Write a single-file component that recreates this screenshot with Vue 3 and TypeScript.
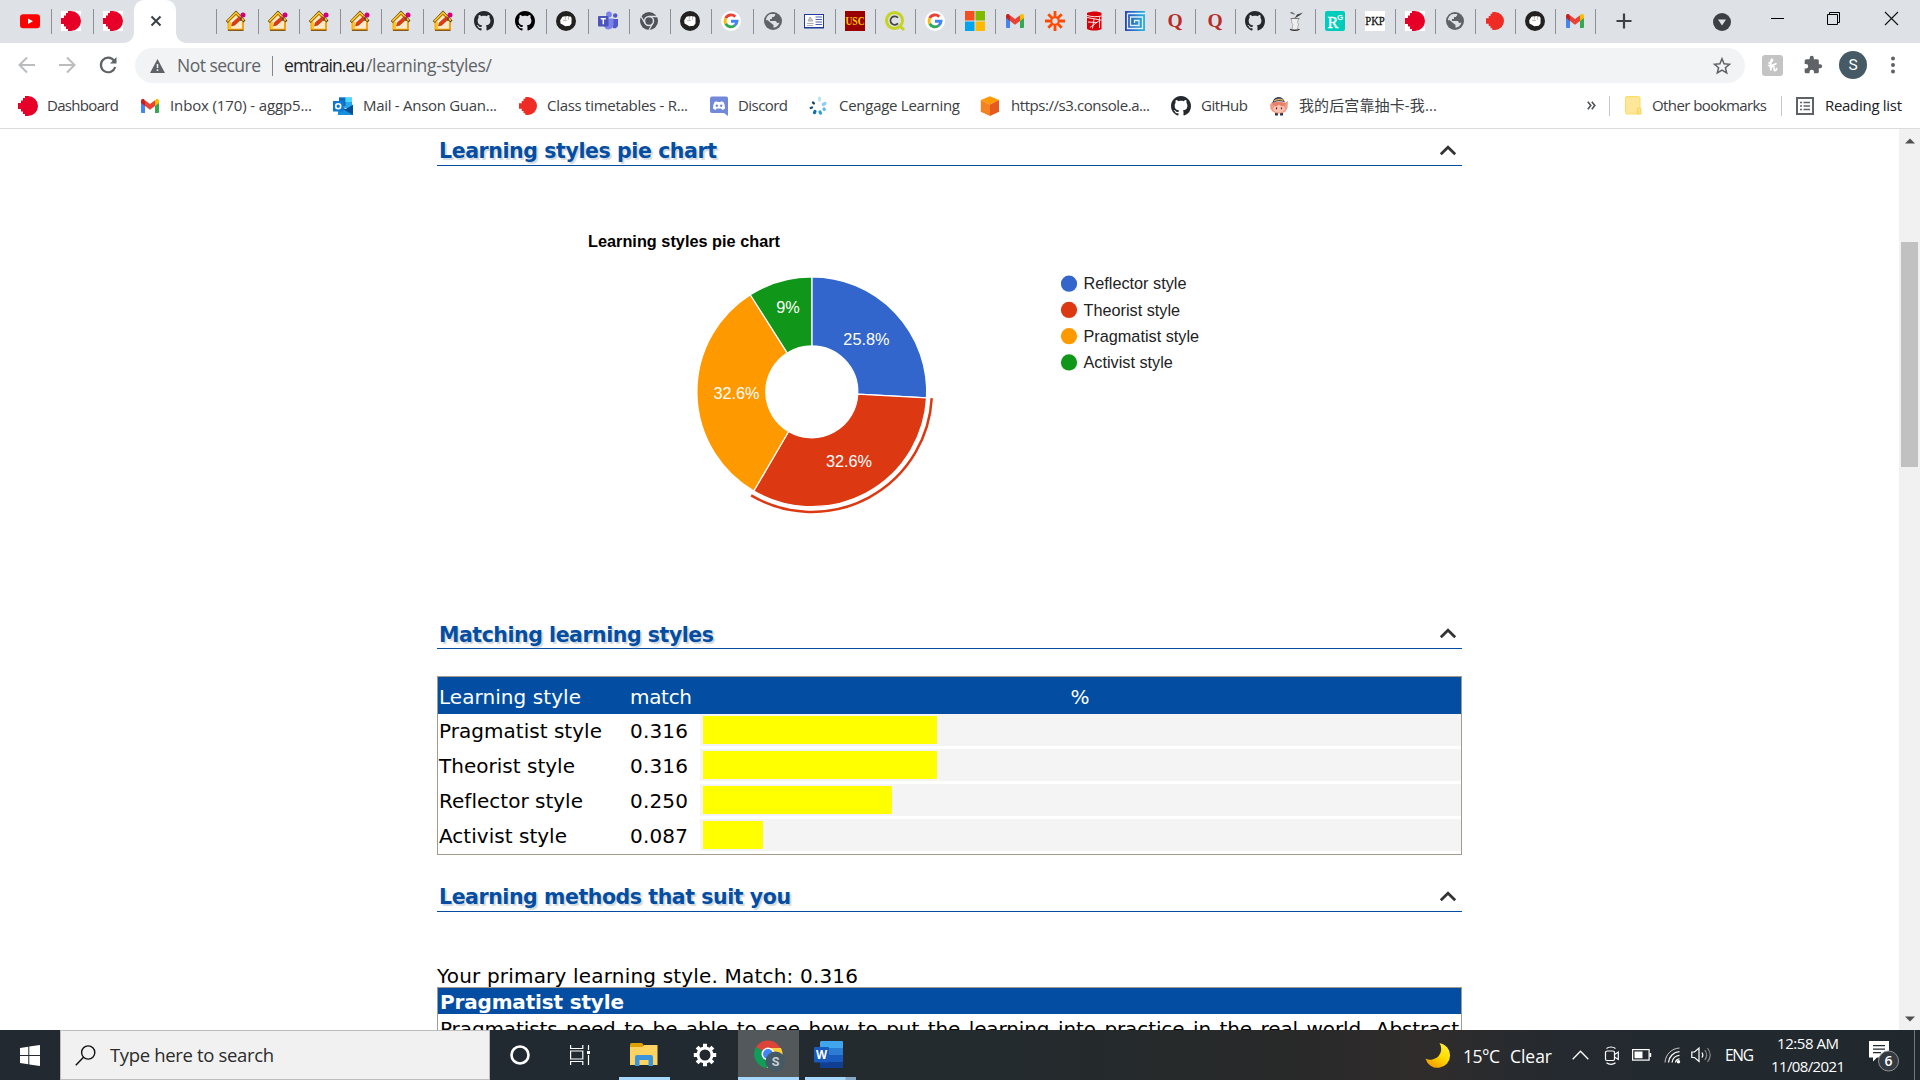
<script setup lang="ts">
interface Tab { icon: string; w: number; pad: number }
interface Bookmark { icon: string; label: string; gap: number; pad: number; w: number }
interface Slice { name: string; value: number; color: string; label: string; lx: number; ly: number }

// Spreads a label over a given width by adjusting its letter spacing.
const vFit = {
  mounted(el: HTMLElement, binding: { value: number }) {
    const range = document.createRange()
    range.selectNodeContents(el)
    const natural = range.getBoundingClientRect().width
    const count = Array.from(el.textContent || '').length
    el.style.width = binding.value + 'px'
    if (count > 1) el.style.letterSpacing = ((binding.value - natural) / (count - 1)).toFixed(3) + 'px'
  },
}

const rmit = (c: string) =>
  `<path fill="${c}" d="M10 0a10 10 0 1 1 0 20H7v-2H5v-2.500H3V13H0V7h3V4.500h2V2h2V0z"/>`
const github = (c: string) =>
  `<path fill="${c}" transform="scale(1.25)" d="M8 0C3.580 0 0 3.580 0 8c0 3.540 2.290 6.530 5.470 7.590.4.070.55-.17.55-.38 0-.19-.01-.82-.01-1.490-2.010.37-2.530-.49-2.690-.94-.09-.23-.48-.94-.82-1.130-.28-.15-.68-.52-.01-.53.63-.01 1.080.58 1.230.82.72 1.210 1.870.87 2.330.66.07-.52.28-.87.51-1.070-1.780-.2-3.640-.89-3.640-3.950 0-.87.31-1.590.82-2.150-.08-.2-.36-1.020.08-2.120 0 0 .67-.21 2.200.82.64-.18 1.320-.27 2-.27s1.360.09 2 .27c1.530-1.040 2.200-.82 2.200-.82.44 1.100.16 1.920.08 2.120.51.56.82 1.270.82 2.150 0 3.070-1.870 3.750-3.650 3.950.29.25.54.73.54 1.480 0 1.070-.01 1.930-.01 2.200 0 .21.15.46.55.38A8.010 8.010 0 0 0 16 8c0-4.420-3.580-8-8-8z"/>`
const quora = `<text x="10" y="15.800" text-anchor="middle" font-family="Liberation Serif, serif" font-weight="bold" font-size="19.500" fill="#b92b27">Q</text>`

const icons: Record<string, string> = {
  youtube: '<rect y="3.200" width="20" height="14" rx="3.200" fill="#f00"/><path d="M8 7.400v5.600l5-2.800z" fill="#fff"/>',
  rmit: '<path fill="#fff" d="M0 0h20v20H0z"/>' + rmit('#e60028'),
  rmitPlain: rmit('#e60028'),
  rmitSmall: `<g transform="translate(1 1) scale(.9)">${rmit('#ee2b24')}</g>`,
  blank: '',
  house: '<path d="M2.500 10v8.700h14.500V10L10 3z" fill="#fbe9c8" stroke="#f59a00" stroke-width="1.800"/><path d="M2.500 18.200V11h2.500v7.200z" fill="#ffc61a"/><path d="M.8 11 10 1.300 18.500 10.500" fill="none" stroke="#5a3d10" stroke-width="2.600"/><path d="M1.300 10.400 10 1.600l7.800 8" fill="none" stroke="#ffc81e" stroke-width="1.700"/><path d="m5.500 15 .8-3.300 7-6.200 2.300 2.500-6.900 6.200z" fill="#e03a12" stroke="#9c2b0a" stroke-width=".5"/><path d="M15 6v4" stroke="#444" stroke-width="1.200"/><circle cx="17" cy="4" r="2.500" fill="#d4007a"/><path d="M2 19.300h15.500" stroke="#6b4110" stroke-width="1"/>',
  github: github('#24292e'),
  githubBlack: github('#000'),
  fist: '<circle cx="10" cy="10" r="10" fill="#23211f"/><path fill="#fff" d="M4.200 9.200 6.500 5.800l2.300-.6.700.4 2.200-.7 1 .5 2 .2.900 1.300-.1 5.600-1.700 2.300-4.500.5-2.500-1.600-2.300-1.200z"/><path d="M9.300 5.800v3M12.400 5.500v3.300M6.800 9.300l4.200.3" stroke="#777" stroke-width=".5" fill="none"/>',
  teams: '<circle cx="11" cy="3.500" r="2.900" fill="#7b83eb"/><circle cx="17.200" cy="4.500" r="2.200" fill="#5059c9"/><path d="M14 8h6v6a3.500 3.500 0 0 1-5 3z" fill="#5059c9"/><path d="M6 7.500h9.500V14a5 5 0 0 1-9.500 1.500z" fill="#7b83eb"/><rect y="5" width="10.500" height="10.500" rx="1" fill="#4b53bc"/><path d="M2.700 7.700h5.200M5.300 7.700v5.600" stroke="#fff" stroke-width="1.500"/>',
  chromeGrey: '<circle cx="10" cy="10" r="9" fill="#50545a"/><circle cx="10" cy="10" r="4.500" fill="#50545a" stroke="#dee1e6" stroke-width="1.500"/><path d="M10 5.500h8M6.200 12.300 2 5.500M13.800 12.300 10 19" stroke="#dee1e6" stroke-width="1.300"/>',
  google: '<circle cx="10" cy="10" r="10" fill="#fff"/><g fill="none" stroke-width="2.900"><path d="M14.300 5.700A6 6 0 0 0 4.700 7.200" stroke="#ea4335"/><path d="M4.700 7.200a6 6 0 0 0 0 5.600" stroke="#fbbc05"/><path d="M4.700 12.800a6 6 0 0 0 9.100 1.700" stroke="#34a853"/><path d="M10 10.200h6a6 6 0 0 1-2.200 4.300" stroke="#4285f4"/></g>',
  globe: '<circle cx="10" cy="10" r="9" fill="#5f6368"/><path d="M3 9.500c0-3 2-6 5-6.500l4 0c1 1.500-1 2-1 3H9v2H7v2h5c2 0 1 2 3 2l1.500-.5c-.8 3-3.500 5-6 5.200V14L8 12l-3.500-3z" fill="#dee1e6"/>',
  news: '<rect x=".5" y="3.500" width="19" height="13" fill="#fff" stroke="#1f3a9a"/><path d="M0 17h20" stroke="#1f3a9a" stroke-width="1"/><path d="M3 12.500h6.500M3 14.500h6M4 10l2-4 3 4z" stroke="#aaa" fill="#ccc"/><path d="M11.500 6H18M11.500 8.500H18M11.500 11H18M11.500 13.500H18" stroke="#4a5fb8"/>',
  usc: '<path fill="#900" d="M0 0h20v20H0z"/><text x="10" y="14" text-anchor="middle" textLength="19" lengthAdjust="spacingAndGlyphs" font-family="Liberation Serif, serif" font-weight="bold" font-size="12" fill="#fc0">USC</text>',
  qlik: '<circle cx="9.500" cy="9.500" r="8" fill="none" stroke="#c6d420" stroke-width="3"/><path d="m15 15 4 4" stroke="#c6d420" stroke-width="3"/><path d="M13 6.800a4.300 4.300 0 1 0 0 5.600" fill="none" stroke="#444" stroke-width="1.700"/>',
  ms: '<path fill="#f25022" d="M0 0h9.500v9.500H0z"/><path fill="#7fba00" d="M10.500 0H20v9.500h-9.500z"/><path fill="#00a4ef" d="M0 10.500h9.500V20H0z"/><path fill="#ffb900" d="M10.500 10.500H20V20h-9.500z"/>',
  gmail: '<path fill="#4285f4" d="M1 5v10.500A1.200 1.200 0 0 0 2.200 17H5V8.500z"/><path fill="#34a853" d="M19 5v10.500a1.200 1.200 0 0 1-1.200 1.500H15V8.500z"/><path fill="#fbbc04" d="M15 4.500V10l4-3V5c0-2-2-2.500-3.200-1.500z"/><path fill="#c5221f" d="M5 4.500V10L1 7V5c0-2 2-2.500 3.200-1.500z"/><path fill="#ea4335" d="M5 10V4.200l5 3.900 5-3.900V10l-5 3.800z"/>',
  zapier: '<g stroke="#ff4a00" stroke-width="2.800"><path d="M10 0v6.500M10 13.500V20M0 10h6.500M13.500 10H20M3.300 3.300l4.200 4.200M12.500 12.500l4.200 4.200M16.700 3.300l-4.200 4.200M7.500 12.500l-4.200 4.200"/></g><circle cx="10" cy="10" r="3.700" fill="#dee1e6" stroke="#ff4a00" stroke-width="2"/>',
  redbrick: '<path fill="#d90007" d="M2 2c5-2 11-2 14.500 0v16c-4 2-10 2-14.500 0z"/><path d="M2 4.500c5 1.500 10 1.500 14.500.5M2 6.500l14.500 2.700M14.500 6v11M14.500 9.500 5 16.500M3 11l9 .5M9 8l-1.500 9.500" stroke="#fff" stroke-width=".9" fill="none"/>',
  maze: '<linearGradient id="mz" x2="1" y2="0"><stop stop-color="#2a44b8"/><stop offset="1" stop-color="#2bb6dc"/></linearGradient><path fill="url(#mz)" d="M0 0h20v20H0z"/><path d="M2.500 2.500v15h15V6h-12v8.500h8.500V9.500H9.500v2.500M2.500 2.500H20" fill="none" stroke="#dff1fa" stroke-width="1.300"/>',
  quora,
  tree: '<path d="M6.500 8c2-1.200 5-1.200 7 0l-1 3.500 1 1.500-1 5c-1.800 1-3.700 1-5.500 0l.8-4.500L6.500 11z" fill="#eee" stroke="#999" stroke-width=".7"/><path d="M5 18.200c2.500 1.500 7 1.500 9.500 0" fill="none" stroke="#333" stroke-width="1.200"/><path d="M5.500 7.500h9" stroke="#666" stroke-width=".8"/><path d="M9.500 7.500 12 3.500l6-2-3.500 3z" fill="#444"/><path d="M5 1.500c2-1 4 0 5 2-2 0-4-.5-5-2z" fill="#777"/>',
  rg: '<rect width="20" height="20" rx="2" fill="#00ccbb"/><text x="2.500" y="17" font-family="Liberation Serif, serif" font-size="16" fill="#fff" stroke="#fff" stroke-width=".4">R</text><text x="12" y="8.500" font-family="Liberation Sans, sans-serif" font-weight="bold" font-size="8" fill="#fff">G</text>',
  pkp: '<path fill="#fff" d="M0 0h20v20H0z"/><text x="10" y="14" text-anchor="middle" textLength="19.500" lengthAdjust="spacingAndGlyphs" font-family="Liberation Serif, serif" font-size="12" fill="#111" stroke="#111" stroke-width=".3">PKP</text>',
  outlook: '<path fill="#28a8ea" d="M6 1.500h13V12H6z"/><path fill="#0f6cbd" d="M6 1.500h6.500V10H6z"/><path fill="#50d9ff" d="M12.500 1.500H19V6h-6.500z"/><path fill="#1490df" d="M5 10l7.500 3L20 8.500V19H5z"/><path fill="#0a4f94" d="m8 12 12 7V9l-7 4z"/><path fill="#0f78d4" d="M0 5h10.500v10.500H0z"/><circle cx="5.200" cy="10.200" r="2.500" fill="none" stroke="#fff" stroke-width="1.600"/>',
  discord: '<path fill="#7289da" d="M3 .5h14a2 2 0 0 1 2 2V20l-4-3H3a2 2 0 0 1-2-2V2.500a2 2 0 0 1 2-2z"/><path fill="#fff" d="M4 12.500c0-3 .8-5 1.500-6.500l2.500-.8.500.8h3l.5-.8 2.500.8c.8 1.500 1.500 3.500 1.500 6.500-1 1-2 1.200-3 1.300l-.6-1.200H7.600L7 13.800c-1-.1-2-.3-3-1.300z"/><circle cx="7.800" cy="9.800" r="1.200" fill="#7289da"/><circle cx="12.200" cy="9.800" r="1.200" fill="#7289da"/>',
  cengage: '<g stroke-linecap="round" stroke-width="3.200"><path d="M11.500 2v2" stroke="#b9e5f7"/><path d="m17 7.500-1.800 1" stroke="#8fd0ee"/><path d="m16 13 .3.500" stroke="#5cbbe8"/><path d="m12 16 .5 1.200" stroke="#2aa0dc"/><path d="m7 15.500-.5 1.200" stroke="#0f6fae"/><path d="M4 11.500 2.800 12" stroke="#174e7c" stroke-width="2.400"/><path d="m5 6.500.8.800" stroke="#124266" stroke-width="2.400"/></g>',
  s3: '<path fill="#f90" d="M10 .3 19 4l-9 4.500L.8 4z"/><path fill="#f58220" d="M.8 4 10 8.500V20L.8 15.800z"/><path fill="#e8591c" d="M19 4v11.800L10 20V8.500z"/>',
  anime: '<path d="M6 15v4.500h3V17M11 17v2.500h3V15" fill="#2c3852"/><path fill="#f09a84" d="M3 6 1 9l.5 4 2 2.500c3 2.500 10 2.500 13 0l2-3.500.5-7-3.500 2z"/><ellipse cx="10" cy="12.500" rx="5.800" ry="4" fill="#fbc4b0"/><path fill="#3b4766" d="M3.500 7c1-8 11-8 12.500-.5-4-2-8-1.800-12.500.5z"/><path d="M5 5c3-2 7-1.800 9.500-.5" stroke="#e9b949" stroke-width="1.200" fill="none"/><path fill="#e8806b" d="M3 7.500c3.500-2.500 10-2.500 14 0-1 2-3 3-5 2.500L10 8.500 8 10c-2 .5-4-.5-5-2.500z"/><path d="M7.500 11.500v1.800M12.500 11.500v1.800" stroke="#513" stroke-width="1.200"/>',
}

const tabs: Tab[] = [
  { icon: 'youtube', w: 52, pad: 20 },
  { icon: 'rmit', w: 42, pad: 9 },
]

const rightTabs: Tab[] = ([
  ['blank', 41], ['house', 42], ['house', 41], ['house', 41], ['house', 41], ['house', 42],
  ['house', 41], ['github', 41], ['githubBlack', 41], ['fist', 42], ['teams', 41],
  ['chromeGrey', 41], ['fist', 41], ['google', 42], ['globe', 41], ['news', 41],
  ['usc', 40], ['qlik', 40], ['google', 40], ['ms', 40], ['gmail', 40], ['zapier', 40],
  ['redbrick', 40], ['maze', 40], ['quora', 40], ['quora', 40], ['github', 40],
  ['tree', 40], ['rg', 40], ['pkp', 40], ['rmit', 40], ['globe', 40], ['rmitSmall', 40],
  ['fist', 40], ['gmail', 40],
] as [string, number][]).map(([icon, w]) => ({ icon, w, pad: 9 }))

const bookmarks: Bookmark[] = [
  { icon: 'rmitPlain', label: 'Dashboard', gap: 18, pad: 9, w: 72 },
  { icon: 'gmail', label: 'Inbox (170) - aggp5...', gap: 21, pad: 10, w: 142 },
  { icon: 'outlook', label: 'Mail - Anson Guan...', gap: 21, pad: 10, w: 134 },
  { icon: 'rmitSmall', label: 'Class timetables - R...', gap: 21, pad: 9, w: 141 },
  { icon: 'discord', label: 'Discord', gap: 21, pad: 9, w: 50 },
  { icon: 'cengage', label: 'Cengage Learning', gap: 20, pad: 11, w: 121 },
  { icon: 's3', label: 'https://s3.console.a...', gap: 20, pad: 11, w: 139 },
  { icon: 'github', label: 'GitHub', gap: 21, pad: 10, w: 47 },
  { icon: 'anime', label: '我的后宫靠抽卡-我...', gap: 21, pad: 10, w: 138 },
]

const cx = 811.8
const cy = 391.8
const slices: Slice[] = [
  { name: 'Reflector style', value: 23, color: '#3366cc', label: '25.8%', lx: 866.4, ly: 344.5 },
  { name: 'Theorist style', value: 29, color: '#dc3912', label: '32.6%', lx: 849, ly: 467 },
  { name: 'Pragmatist style', value: 29, color: '#ff9900', label: '32.6%', lx: 736.5, ly: 399 },
  { name: 'Activist style', value: 8, color: '#109618', label: '9%', lx: 787.9, ly: 313 },
]
const total = slices.reduce((sum, s) => sum + s.value, 0)
const point = (r: number, t: number) => {
  const a = t * 2 * Math.PI
  return `${(cx + r * Math.sin(a)).toFixed(2)} ${(cy - r * Math.cos(a)).toFixed(2)}`
}
let acc = 0
const arcs = slices.map((s) => {
  const a = acc / total
  acc += s.value
  const b = acc / total
  return {
    ...s,
    d: `M${point(114.9, a)}A114.9 114.9 0 0 1 ${point(114.9, b)}L${point(46, b)}A46 46 0 0 0 ${point(46, a)}Z`,
    ring: `M${point(120.1, a)}A120.1 120.1 0 0 1 ${point(120.1, b)}`,
  }
})

const rows = [
  { name: 'Pragmatist style', nw: 163, match: '0.316', bar: 234 },
  { name: 'Theorist style', nw: 136, match: '0.316', bar: 234 },
  { name: 'Reflector style', nw: 144, match: '0.250', bar: 189 },
  { name: 'Activist style', nw: 128, match: '0.087', bar: 60 },
]
</script>

<template>
  <div class="screen">
    <header class="tabstrip">
      <div v-for="(t, i) in tabs" :key="i" class="tab" :style="{ width: t.w + 'px', paddingLeft: t.pad + 'px' }">
        <svg width="20" height="20" viewBox="0 0 20 20" v-html="icons[t.icon]" />
      </div>
      <div class="tab before"><svg width="20" height="20" viewBox="0 0 20 20" v-html="icons.rmit" /></div>
      <div class="tab active">
        <svg width="12" height="12" viewBox="0 0 12 12"><path d="m1.500 1.500 9 9m0-9-9 9" stroke="#3c4043" stroke-width="2" /></svg>
      </div>
      <div v-for="(t, i) in rightTabs" :key="'r' + i" class="tab" :style="{ width: t.w + 'px', paddingLeft: t.pad + 'px' }">
        <svg width="20" height="20" viewBox="0 0 20 20" v-html="icons[t.icon]" />
      </div>
      <svg class="plus" width="16" height="16" viewBox="0 0 16 16"><path d="M8 .5v15M.5 8h15" stroke="#3c4043" stroke-width="2.200" /></svg>
      <div class="window-buttons">
        <svg width="18" height="18" viewBox="0 0 18 18"><circle cx="9" cy="9" r="9" fill="#3c4043" /><path d="M5 6.500h8L9 12.500z" fill="#dee1e6" /></svg>
        <svg class="min" width="13" height="13" viewBox="0 0 13 13"><path d="M0 6.500h13" stroke="#000" /></svg>
        <svg class="restore" width="13" height="13" viewBox="0 0 13 13"><path d="M.5 2.500h10v10H.5zM2.500 2.500v-2h10v10h-2" fill="none" stroke="#000" /></svg>
        <svg class="close" width="13" height="13" viewBox="0 0 13 13"><path d="m0 0 13 13M13 0 0 13" stroke="#111" stroke-width="1.100" /></svg>
      </div>
    </header>

    <div class="toolbar">
      <svg class="back" width="18" height="18" viewBox="0 0 18 18"><path d="M17 9H2M9 1.500 1.500 9 9 16.500" fill="none" stroke="#babcbe" stroke-width="2" /></svg>
      <svg class="forward" width="18" height="18" viewBox="0 0 18 18"><path d="M1 9h15M9 1.500 16.500 9 9 16.500" fill="none" stroke="#babcbe" stroke-width="2" /></svg>
      <svg class="reload" width="18" height="18" viewBox="0 0 18 18"><path d="M15 4.500A7.300 7.300 0 1 0 16.200 11" fill="none" stroke="#5f6368" stroke-width="2.200" /><path d="M17.500 1v6.500H11z" fill="#5f6368" /></svg>
      <div class="omnibox">
        <svg width="15" height="14" viewBox="0 0 15 14"><path d="M7.500 0 15 14H0z" fill="#5f6368" /><path d="M7.500 5v4M7.500 10.300v1.700" stroke="#f1f3f4" stroke-width="1.500" /></svg>
        <span v-fit="84" class="not-secure">Not secure</span>
        <i class="bar" />
        <span v-fit="81" class="host">emtrain.eu</span>
        <span v-fit="126" class="path">/learning-styles/</span>
        <svg class="star" width="18" height="18" viewBox="0 0 18 18"><path d="m9 1.800 2.100 5 5.400.5-4.100 3.500 1.300 5.200L9 13.200l-4.700 2.800 1.300-5.200-4.100-3.500 5.400-.5z" fill="none" stroke="#5f6368" stroke-width="1.500" /></svg>
      </div>
      <svg class="honey" width="21" height="21" viewBox="0 0 21 21"><rect width="21" height="21" rx="3" fill="#c4c4c4" /><path d="M7 8c3-.5 4.500-3.500 3-3.700S8.500 10 8.700 15.500c.3-3.500 1.500-4.700 2.700-4.500s0 4.300 1.300 4.500 1.800-1 2-2M6.500 10.500c2 .5 5-.2 7.500-1.700" fill="none" stroke="#fff" stroke-width="1.700" stroke-linecap="round" /></svg>
      <svg class="puzzle" width="20" height="20" viewBox="0 0 24 24"><path fill="#5f6368" d="M20.500 11H19V7a2 2 0 0 0-2-2h-4V3.500a2.500 2.500 0 0 0-5 0V5H4a2 2 0 0 0-2 2v3.800h1.500a2.700 2.700 0 0 1 0 5.400H2V20a2 2 0 0 0 2 2h3.800v-1.500a2.700 2.700 0 0 1 5.400 0V22H17a2 2 0 0 0 2-2v-4h1.500a2.500 2.500 0 0 0 0-5z" /></svg>
      <div class="avatar">S</div>
      <svg class="dots" width="4" height="18" viewBox="0 0 4 18"><g fill="#5f6368"><circle cx="2" cy="2.500" r="2" /><circle cx="2" cy="9" r="2" /><circle cx="2" cy="15.500" r="2" /></g></svg>
    </div>

    <nav class="bookmarks">
      <div v-for="b in bookmarks" :key="b.label" class="bookmark" :style="{ marginLeft: b.gap + 'px', gap: b.pad + 'px' }">
        <svg width="20" height="20" viewBox="0 0 20 20" v-html="icons[b.icon]" />
        <span v-fit="b.w">{{ b.label }}</span>
      </div>
      <div class="bookmarks-end">
        <svg class="more" width="9" height="9" viewBox="0 0 9 9"><path d="m.8.8 3 3.700-3 3.700M4.800.8l3 3.700-3 3.700" fill="none" stroke="#4d5156" stroke-width="1.600" /></svg>
        <i />
        <svg class="folder" width="17" height="19" viewBox="0 0 17 19"><rect x=".5" y=".5" width="14.500" height="17.500" rx="1.500" fill="#ffe79a" stroke="#fddc63" /><path d="M12.500 12.500c1.500-1.500 3.500-1 3.500 1v4.500h-3.500z" fill="#ffe07a" stroke="#f6cf50" stroke-width=".8" /></svg>
        <span v-fit="115">Other bookmarks</span>
        <i />
        <svg class="list" width="18" height="18" viewBox="0 0 18 18"><rect x="1" y="1" width="16" height="16" fill="none" stroke="#5f6368" stroke-width="2" /><path d="M4 5.500h2M4 9h2M4 12.500h2M7.500 5.500H14M7.500 9H14M7.500 12.500H14" stroke="#5f6368" stroke-width="1.500" /></svg>
        <span v-fit="77" class="dark">Reading list</span>
      </div>
    </nav>

    <div class="viewport">
      <main class="page">
        <h2><span v-fit="278">Learning styles pie chart</span><svg width="18" height="11" viewBox="0 0 18 11"><path d="m1.800 9.200 7.200-7 7.200 7" /></svg></h2>
        <svg class="chart" width="1025" height="446" viewBox="437 166 1025 446">
          <text class="chart-title" x="588" y="247" textLength="192">Learning styles pie chart</text>
          <path v-for="a in arcs" :key="a.name" :d="a.d" :fill="a.color" stroke="#fff" stroke-width="1.250" />
          <path :d="arcs[1].ring" fill="none" stroke="#dc3912" stroke-width="2.500" />
          <text v-for="a in arcs" :key="'l' + a.name" class="pct" :x="a.lx" :y="a.ly">{{ a.label }}</text>
          <g v-for="(a, i) in arcs" :key="'g' + a.name">
            <circle cx="1069" :cy="283.7 + i * 26.25" r="8.100" :fill="a.color" />
            <text class="legend" x="1083.500" :y="289.400 + i * 26.25">{{ a.name }}</text>
          </g>
        </svg>

        <h2 class="low"><span v-fit="275">Matching learning styles</span><svg width="18" height="11" viewBox="0 0 18 11"><path d="m1.800 9.200 7.200-7 7.200 7" /></svg></h2>
        <section class="matches">
          <div class="row head">
            <div class="name"><span v-fit="142">Learning style</span></div>
            <div class="match"><span v-fit="62">match</span></div>
            <div class="percent">%</div>
          </div>
          <div v-for="r in rows" :key="r.name" class="row">
            <div class="name"><span v-fit="r.nw">{{ r.name }}</span></div>
            <div class="match"><span v-fit="58">{{ r.match }}</span></div>
            <div class="track"><div class="fill" :style="{ width: r.bar + 'px' }" /></div>
          </div>
        </section>

        <h2 class="third"><span v-fit="352">Learning methods that suit you</span><svg width="18" height="11" viewBox="0 0 18 11"><path d="m1.800 9.200 7.200-7 7.200 7" /></svg></h2>
        <p class="primary"><span v-fit="421">Your primary learning style. Match: 0.316</span></p>
        <section class="style-box">
          <h3><span v-fit="184">Pragmatist style</span></h3>
          <p>Pragmatists need to be able to see how to put the learning into practice in the real world. Abstract</p>
        </section>
      </main>
      <aside class="scrollbar">
        <svg width="10" height="6" viewBox="0 0 10 6"><path d="M0 5.500 5 .5l5 5z" fill="#505050" /></svg>
        <div class="thumb" />
        <svg class="down" width="10" height="6" viewBox="0 0 10 6"><path d="m0 .5 5 5 5-5z" fill="#505050" /></svg>
      </aside>
    </div>

    <footer class="taskbar">
      <div class="start">
        <svg width="20" height="21" viewBox="0 0 20 21"><path fill="#fff" d="M0 3 8.300 1.800V10H0zM9.300 1.600 20 0v10H9.300zM0 11h8.300v8.200L0 18zM9.300 11H20v10L9.300 19.400z" /></svg>
      </div>
      <div class="search">
        <svg width="21" height="21" viewBox="0 0 21 21"><circle cx="13.200" cy="7.500" r="6.600" fill="none" stroke="#111" stroke-width="1.400" /><path d="M8.500 12.300.8 20.200" stroke="#111" stroke-width="1.500" /></svg>
        <span v-fit="164">Type here to search</span>
      </div>
      <div class="app cortana"><svg width="20" height="20" viewBox="0 0 20 20"><circle cx="10" cy="10" r="8.500" fill="none" stroke="#fff" stroke-width="2.600" /></svg></div>
      <div class="app taskview"><svg width="20" height="20" viewBox="0 0 20 20"><path d="M.6 0v3.500h12.200V0M.6 6h12.200v8H.6zM.6 20v-3.500h12.200V20M18.500 0v5M18.500 10v10" fill="none" stroke="#fff" stroke-width="1.200" /><path d="M17 6h3v3h-3z" fill="#fff" /></svg></div>
      <div class="app open explorer"><svg width="28" height="24" viewBox="0 0 28 24"><path d="M0 1.500A1.500 1.500 0 0 1 1.500 0H12l1.500 2-1.500 3H0z" fill="#e0a000" /><path d="M0 4h12l2-2h13.500v20H0z" fill="#ffd362" /><path d="M5 14a2 2 0 0 1 2-2h14a2 2 0 0 1 2 2v9h-4.500v-6h-9v6H5z" fill="#3a95dd" /></svg></div>
      <div class="app gear"><svg width="24" height="24" viewBox="0 0 24 24"><circle cx="12" cy="12" r="7" fill="none" stroke="#fff" stroke-width="3" /><g stroke="#fff" stroke-width="4"><path d="M12 .8v4M12 19.200v4M.8 12h4M19.200 12h4M4.100 4.100l2.800 2.800M17.100 17.100l2.800 2.800M19.900 4.100l-2.800 2.800M6.900 17.100l-2.800 2.800" /></g><circle cx="12" cy="12" r="5" fill="#22292f" /></svg></div>
      <div class="app open chrome">
        <svg width="32" height="32" viewBox="0 0 32 32"><path d="M14 14 1.900 7.200A14 14 0 0 1 26.100 7.500L28 10z" fill="#db4437" /><path d="M14 14 2 7a14 14 0 0 0 11 21l3-2z" fill="#0f9d58" /><path d="M14 8h13a14 14 0 0 1-14 20z" fill="#ffcd40" /><circle cx="14" cy="14" r="6.500" fill="#fff" /><circle cx="14" cy="14" r="5" fill="#4285f4" /><circle cx="21.500" cy="21.500" r="10" fill="#455a64" /><text x="21.500" y="26" text-anchor="middle" font-family="Roboto, sans-serif" font-weight="bold" font-size="12.500" fill="#c9d0d4">S</text></svg>
      </div>
      <div class="app open word"><svg width="30" height="27" viewBox="0 0 30 27"><path fill="#41a5ee" d="M7 0h21a1 1 0 0 1 1 1v6H6V1z" /><path fill="#2b7cd3" d="M6 7h23v7H6z" /><path fill="#185abd" d="M6 14h23v7H6z" /><path fill="#103f91" d="M6 21h23v5a1 1 0 0 1-1 1H7a1 1 0 0 1-1-1z" /><rect y="6" width="15" height="15.500" rx="1" fill="#185abd" /><text x="7.500" y="18" text-anchor="middle" font-family="Open Sans, sans-serif" font-weight="bold" font-size="11.500" fill="#fff">W</text></svg></div>
      <div class="tray">
        <svg class="moon" width="24" height="24" viewBox="0 0 24 24"><defs><linearGradient id="moon" x1="1" y1="0" x2=".4" y2="1"><stop stop-color="#fff04a" /><stop offset=".55" stop-color="#fd0" /><stop offset="1" stop-color="#f8a100" /></linearGradient></defs><path d="M14.500 0A12.500 12.500 0 1 1 .5 15.500 10.800 10.800 0 0 0 14.500 0z" fill="url(#moon)" /></svg>
        <span v-fit="37" class="temp">15°C</span>
        <span v-fit="42" class="clear">Clear</span>
        <svg class="chev" width="17" height="10" viewBox="0 0 17 10"><path d="M.7 9.200 8.500 1.200l7.800 8" fill="none" stroke="#fff" stroke-width="1.300" /></svg>
        <svg class="cam" width="16" height="19" viewBox="0 0 16 19"><g fill="none" stroke="#fff" stroke-width="1.200"><rect x="1.500" y="5" width="9" height="9.500" rx="1.500" /><path d="m10.500 8.500 3.800-2.500v7.500l-3.800-2.500M2.500 2.500C5 .5 9 .5 11.500 2.500M2.500 16.800c2.500 2 6.500 2 9 0" /></g></svg>
        <svg class="battery" width="20" height="12" viewBox="0 0 20 12"><rect x=".6" y=".6" width="16.500" height="10.500" fill="none" stroke="#fff" stroke-width="1.200" /><path d="M2.500 2.500h8v6.800h-8zM17.500 4h1.700v4h-1.700z" fill="#fff" /></svg>
        <svg class="wifi" width="17" height="17" viewBox="0 0 17 17"><g fill="none" stroke="#fff"><path d="M1 15.500C1.500 7.500 7.500 1.500 15.500 1" stroke-width="1" stroke-opacity=".75" /><path d="M4.500 15.500C5 9.500 9.500 5 15.500 4.700" stroke-width="1.300" /><path d="M8 15.500C8.500 11.500 11.500 8.500 15.500 8.300" stroke-width="1.300" /><path d="M11.500 15.500c.3-2 2-3.500 4-3.700" stroke-width="1.300" /></g><circle cx="14.500" cy="14.800" r="1.700" fill="#fff" /></svg>
        <svg class="speaker" width="21" height="18" viewBox="0 0 21 18"><g fill="none" stroke="#fff" stroke-width="1.200"><path d="M.8 6h2.700L8 2v13.500l-4.500-4H.8z" /><path d="M11 6.500c1 1.500 1 3.500 0 5" /><path d="M13.800 4c2.200 3 2.200 7 0 10M16.500 2c3.500 4.500 3.500 9.500 0 14" stroke-opacity=".45" /></g></svg>
        <span v-fit="29" class="lang">ENG</span>
        <div class="clock"><span v-fit="62">12:58 AM</span><span v-fit="74">11/08/2021</span></div>
        <svg class="notes" width="31" height="31" viewBox="0 0 31 31"><path d="M0 0h20v16.500H8l-4 4v-4H0z" fill="#fff" /><path d="M4 4.700h12M4 8.200h12M4 11.700h8" stroke="#22292f" stroke-width="1.300" /><circle cx="19.500" cy="20" r="10" fill="#343a3f" stroke="#8d9194" /><text x="19.500" y="25.200" text-anchor="middle" font-family="Open Sans, sans-serif" font-weight="600" font-size="14" fill="#fff">6</text></svg>
        <i />
      </div>
    </footer>
  </div>
</template>

<style>
body { margin: 0; overflow: hidden; }
</style>

<style scoped>
.screen { width: 1920px; height: 1080px; display: flex; flex-direction: column; background: #fff; overflow: hidden; font-family: "Open Sans", "Noto Sans", "Noto Sans CJK SC", sans-serif; }
.screen * { box-sizing: border-box; }
svg { display: block; flex: none; overflow: visible; }
span { display: inline-block; white-space: nowrap; flex: none; }

.tabstrip { height: 43px; display: flex; align-items: flex-start; background: #dee1e6; flex: none; }
.tab { height: 25px; margin-top: 9px; padding-top: 2px; border-right: 1px solid #8d9095; flex: none; }
.tab.before { width: 40px; padding-left: 9px; border: 0; }
.tab.active { position: relative; width: 42px; height: 43px; margin-top: 0; padding: 15px 0 0 16px; border: 0; background: #fff; border-radius: 10px 10px 0 0; }
.tab.active::before, .tab.active::after { content: ""; position: absolute; bottom: 0; width: 10px; height: 10px; }
.tab.active::before { left: -10px; background: radial-gradient(circle at 0 0, transparent 9.500px, #fff 10px); }
.tab.active::after { right: -10px; background: radial-gradient(circle at 100% 0, transparent 9.500px, #fff 10px); }
.plus { margin: 13px 0 0 20px; }
.window-buttons { display: flex; align-items: flex-start; margin-left: auto; padding: 12px 22px 0 0; }
.window-buttons .min { margin-left: 40px; }
.window-buttons .restore { margin-left: 43px; }
.window-buttons .close { margin-left: 45px; }
.window-buttons > svg:first-child { margin-top: 1px; }

.toolbar { height: 44px; display: flex; align-items: center; flex: none; }
.back { margin-left: 18px; }
.forward { margin-left: 22px; }
.reload { margin-left: 23px; }
.omnibox { width: 1610px; height: 35px; margin: 1px 0 0 18px; padding: 0 14px 0 15px; display: flex; align-items: center; border-radius: 18px; background: #f1f3f4; font-size: 17.500px; line-height: 35px; }
.not-secure { margin-left: 12px; color: #5f6368; }
.bar { width: 1px; height: 20px; margin: 0 11px; background: #80868b; }
.host { color: #202124; }
.path { margin-left: 1px; color: #5f6368; }
.star { margin-left: auto; }
.honey { margin-left: 17px; }
.puzzle { margin-left: 20px; }
.avatar { width: 28px; height: 28px; margin-left: 16px; border-radius: 50%; background: #455a64; color: #fff; font: 15.500px/28px Roboto, sans-serif; text-align: center; }
.dots { margin-left: 24px; }

.bookmarks { height: 42px; display: flex; align-items: center; padding-bottom: 4px; border-bottom: 1px solid #dadce0; font-size: 15px; line-height: 28px; color: #3c4043; flex: none; }
.bookmarks span { padding-bottom: 2px; }
.bookmark { display: flex; align-items: center; }
.bookmarks-end { display: flex; align-items: center; margin-left: auto; padding-right: 18px; }
.bookmarks-end i { width: 1px; height: 20px; background: #c4c7cb; }
.more { margin-right: 13px; }
.folder { margin: 0 10px 0 15px; }
.bookmarks-end span + i { margin-left: 14px; }
.list { margin: 0 11px 0 14px; }
.dark { color: #202124; }

.viewport { height: 901px; display: flex; overflow: hidden; flex: none; }
.page { width: 1025px; margin-left: 437px; font-family: "DejaVu Sans", Verdana, sans-serif; font-size: 20px; color: #000; }
h2 { height: 37px; margin: 0; padding: 8px 5px 0 2px; display: flex; justify-content: space-between; border-bottom: 1px solid #034ea2; color: #034ea2; font-size: 20.500px; line-height: 28px; text-shadow: 2px 2px 1px #d3dae1; }
h2.low { padding-top: 9px; }
h2 svg { margin-top: 8px; }
h2.low svg { margin-top: 7px; }
h2 path { fill: none; stroke: #333; stroke-width: 2.700; }
.chart { font-family: "Liberation Sans", Arial, sans-serif; }
.chart-title { font-size: 16.250px; font-weight: bold; }
.pct { font-size: 16.250px; fill: #fff; text-anchor: middle; }
.legend { font-size: 16.250px; fill: #222; }
.matches { height: 179px; margin-top: 27px; border: 1px solid #a39b8c; }
.row { height: 35px; display: flex; line-height: 35px; }
.row.head { height: 37px; padding-top: 3px; background: #034ea2; color: #fff; }
.name { width: 190px; padding-left: 1px; }
.match { width: 72px; padding-left: 2px; }
.percent { flex: 1; padding-right: 1px; text-align: center; }
.track { flex: 1; height: 32px; padding: 2px 3px; background: #f4f4f4; }
.fill { height: 28px; background: #ff0; }
.third { margin-top: 20px; }
.primary { height: 23px; margin: 52px 0 0; line-height: 24px; }
.style-box { height: 80px; border: 1px solid #a39b8c; }
h3 { height: 26px; margin: 0; padding-left: 2px; background: #034ea2; color: #fff; font-size: 20px; line-height: 28px; }
.style-box p { margin: 0; padding: 2px 2px 0; line-height: 27px; white-space: nowrap; letter-spacing: -.1px; text-align: justify; text-align-last: justify; }

.scrollbar { width: 21px; margin-left: auto; padding: 9px 0 8px; display: flex; flex-direction: column; align-items: center; background: #f1f1f1; }
.thumb { width: 17px; height: 225px; margin-top: 98px; background: #c1c1c1; }
.down { margin-top: auto; }

.taskbar { height: 50px; display: flex; flex: none; background: linear-gradient(90deg, #222930 0, #222a31 700px, #242b2e 900px, #242a2c 1100px, #292929 1300px, #302c2c 1420px, #242a2f 1560px, #20282e 1920px); color: #fff; }
.start { width: 60px; padding: 15px 0 0 20px; }
.search { width: 430px; display: flex; align-items: center; padding-left: 14px; border: 1px solid #bcbcbc; background: #f1f1f1; color: #2b2b2b; font-size: 18.500px; line-height: 48px; }
.search span { margin-left: 14px; }
.app { position: relative; display: flex; align-items: center; justify-content: center; }
.cortana { width: 60px; }
.taskview { width: 60px; }
.explorer { width: 51px; margin-left: 9px; padding-right: 2px; }
.gear { width: 60px; margin-left: 5px; }
.chrome { width: 61px; margin-left: 3px; padding: 2px 0 0 2px; background: #53585b; }
.word { width: 51px; margin-left: 6px; padding-right: 4px; padding-bottom: 1px; }
.app.open::after { content: ""; position: absolute; left: 0; right: 0; bottom: 0; height: 3px; background: #a6d8ff; }
.app.word::after { background: linear-gradient(90deg, #a6d8ff 40px, #86a9c7 41px); }
.tray { margin-left: auto; display: flex; align-items: center; }
.temp { margin-left: 14px; font-size: 17.500px; }
.clear { margin-left: 10px; font-size: 17.500px; }
.temp, .clear { padding-top: 2px; }
.chev { margin-left: 20px; }
.cam { margin-left: 15px; }
.battery { margin-left: 12px; }
.wifi { margin-left: 12px; }
.speaker { margin-left: 10px; }
.lang { margin-left: 13px; font-size: 15.500px; }
.clock { width: 74px; margin-left: 17px; display: flex; flex-direction: column; align-items: center; font-size: 15px; line-height: 23px; }
.notes { margin: 3px 0 0 24px; }
.tray i { width: 1px; height: 50px; margin: 0 5px 0 14px; background: #70757a; }
</style>
